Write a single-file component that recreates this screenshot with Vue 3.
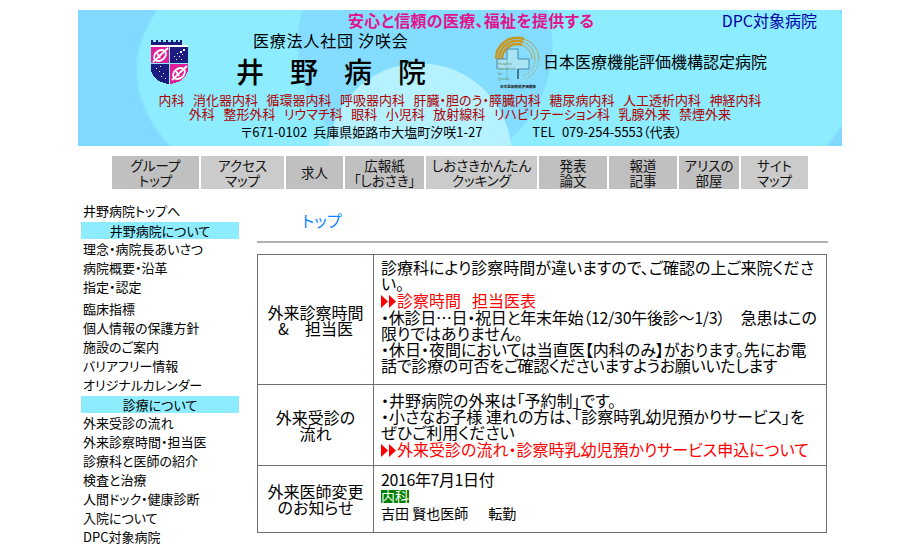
<template>
  <div class="page">
    <header class="head">
      <div class="head-top">
        <span class="tagline">安心と信頼の医療、福祉を提供する</span>
        <span class="dpc">DPC対象病院</span>
      </div>
      <div class="head-main">
        <svg class="shield" viewBox="0 0 37 45" shape-rendering="crispEdges">
          <path d="M0 1h2v2h3V1h2v2h3V1h2v2h3V1h2v2h3V1h2v2h3V1h2v2h2V1h2v5H0z" fill="#1c1c80" />
          <rect y="6" width="37" height="2" fill="#fff" />
          <path d="M0 8h18v16H0z" fill="#e0209a" />
          <path d="M19 8h18v16H19z" fill="#1c1c80" />
          <path d="M0 25h18v20h-2l-8-3-5-4-3-6z" fill="#1c1c80" />
          <path d="M19 25h18v7l-3 6-5 4-8 3h-2z" fill="#e0209a" />
          <g fill="none" stroke="#fff" stroke-width="1.800" shape-rendering="auto">
            <ellipse cx="9" cy="16.500" rx="6.500" ry="4.800" transform="rotate(-38 9 16.500)" />
            <path d="M2 23L17 9M6 14l3 5" />
            <ellipse cx="28" cy="34.500" rx="6.500" ry="4.800" transform="rotate(-38 28 34.500)" />
            <path d="M21 41L36 27M25 32l3 5" />
          </g>
          <g fill="#fff">
            <rect x="32" y="10" width="2" height="2" /><rect x="29" y="12" width="2" height="2" />
            <rect x="26" y="14" width="1" height="1" /><rect x="23" y="17" width="1" height="1" />
            <rect x="28" y="17" width="1" height="1" /><rect x="31" y="15" width="1" height="1" />
            <rect x="25" y="20" width="1" height="1" /><rect x="30" y="20" width="1" height="1" />
            <rect x="5" y="29" width="1" height="1" /><rect x="9" y="27" width="1" height="1" />
            <rect x="8" y="32" width="1" height="1" /><rect x="12" y="34" width="1" height="1" />
            <rect x="10" y="37" width="1" height="1" /><rect x="14" y="39" width="1" height="1" />
          </g>
        </svg>
        <div class="name">
          <div class="corp">医療法人社団 汐咲会</div>
          <div class="title">井野病院</div>
        </div>
        <svg class="jc" viewBox="0 0 46 56">
          <g fill="none" stroke="#c8961e">
            <path d="M2 24A21 21 0 0 1 30 4" stroke-width="2.500" />
            <path d="M5 24A18 18 0 0 1 29 7" stroke-width="2.500" />
            <path d="M8 24A15 15 0 0 1 28 10" stroke-width="2.500" />
            <path d="M30 4A21 21 0 0 1 45 24" stroke-width="0.800" />
            <path d="M29 7A18 18 0 0 1 41 24" stroke-width="0.800" />
            <path d="M28 10A15 15 0 0 1 38 24" stroke-width="0.800" />
            <path d="M45 24A22 22 0 0 1 31 44" stroke-width="0.900" stroke-dasharray="1.500 1.500" />
            <path d="M41 24A18 18 0 0 1 29 41" stroke-width="0.900" stroke-dasharray="1.500 1.500" />
          </g>
          <path d="M3 34V24h10V14h11v10h11v10H24" fill="#a8e4f4" stroke="#4f86a6" stroke-width="1" />
          <path d="M13 34H3M13 24v21" fill="none" stroke="#7aa8b8" stroke-width="0.600" />
          <path d="M24 34v10" stroke="#111" stroke-width="1" />
          <text x="4" y="30" class="jc-small">Hospital</text>
          <text x="4" y="35" class="jc-small">Accredited</text>
          <text x="4" y="40" class="jc-small">for</text>
          <text x="4" y="45" class="jc-small">Quality</text>
          <text x="6" y="53" class="jc-foot">日本医療機能評価機構</text>
        </svg>
        <div class="cert">日本医療機能評価機構認定病院</div>
      </div>
      <div class="depts">
        <div v-for="(row, i) in depts" :key="i" class="dept-row">
          <span v-for="d in row" :key="d">{{ d }}</span>
        </div>
      </div>
      <div class="addr">
        <span>〒671-0102</span>
        <span class="addr-city">兵庫県姫路市大塩町汐咲1-27</span>
        <span class="addr-tel">TEL</span>
        <span class="addr-num">079-254-5553（代表）</span>
      </div>
    </header>

    <nav class="nav">
      <a
        v-for="n in navItems"
        :key="n.label"
        class="nav-item"
        :class="{ pale: n.pale }"
        :style="{ width: n.w + 'px' }"
        v-html="n.label"
      ></a>
    </nav>

    <div class="body">
      <aside class="side">
        <template v-for="s in sideItems" :key="s.t">
          <div v-if="s.head" class="side-head">{{ s.t }}</div>
          <a v-else class="side-link" :class="{ gap: s.gap }">{{ s.t }}</a>
        </template>
      </aside>

      <main class="main">
        <h2 class="crumb">トップ</h2>
        <hr class="rule" />
        <table class="info">
          <tbody>
            <tr class="r1">
              <th>外来診察時間<br />&amp;　担当医</th>
              <td>
                診療科により診察時間が違いますので、ご確認の上ご来院くださ<br />い。<br />
                <a class="red"><svg class="arrows" viewBox="0 0 15 13"><path d="M0 0l7 6.500-7 6.500zM8 0l7 6.500-7 6.500z" /></svg>診察時間<span class="red-gap">担当医表</span></a><br />
                <span class="tight">・休診日…日・祝日と年末年始（12/30午後診～1/3）　急患はこの</span><br />限りではありません。<br />
                ・休日・夜間においては当直医【内科のみ】がおります。先にお電<br /><span class="tight">話で診療の可否をご確認くださいますようお願いいたします</span>
              </td>
            </tr>
            <tr class="r2">
              <th>外来受診の<br />流れ</th>
              <td>
                ・井野病院の外来は「予約制」です。<br />
                ・小さなお子様 連れの方は、「診察時乳幼児預かりサービス」を<br />ぜひご利用ください<br />
                <a class="red"><svg class="arrows" viewBox="0 0 15 13"><path d="M0 0l7 6.500-7 6.500zM8 0l7 6.500-7 6.500z" /></svg>外来受診の流れ・診察時乳幼児預かりサービス申込について</a>
              </td>
            </tr>
            <tr class="r3">
              <th>外来医師変更<br />のお知らせ</th>
              <td>
                <span class="date">2016年7月1日付</span><br />
                <span class="tag">内科</span><br />
                <span class="notice">吉田 賢也医師<span class="notice-gap">転勤</span></span>
              </td>
            </tr>
          </tbody>
        </table>
      </main>
    </div>
  </div>
</template>

<script setup>
const depts = [
  ['内科', '消化器内科', '循環器内科', '呼吸器内科', '肝臓・胆のう・膵臓内科', '糖尿病内科', '人工透析内科', '神経内科'],
  ['外科', '整形外科', 'リウマチ科', '眼科', '小児科', '放射線科', 'リハビリテーション科', '乳腺外来', '禁煙外来'],
]

const navItems = [
  { label: 'グループ<br>トップ', w: 87 },
  { label: 'アクセス<br>マップ', w: 83, pale: true },
  { label: '求人', w: 57 },
  { label: '広報紙<br>「しおさき」', w: 79 },
  { label: 'しおさきかんたん<br>クッキング', w: 111, pale: true },
  { label: '発表<br>論文', w: 68 },
  { label: '報道<br>記事', w: 68 },
  { label: 'アリスの<br>部屋', w: 60 },
  { label: 'サイト<br>マップ', w: 67, pale: true },
]

const sideItems = [
  { t: '井野病院トップへ' },
  { t: '井野病院について', head: true },
  { t: '理念・病院長あいさつ' },
  { t: '病院概要・沿革' },
  { t: '指定・認定' },
  { t: '臨床指標', gap: true },
  { t: '個人情報の保護方針' },
  { t: '施設のご案内' },
  { t: 'バリアフリー情報' },
  { t: 'オリジナルカレンダー' },
  { t: '診療について', head: true },
  { t: '外来受診の流れ' },
  { t: '外来診察時間・担当医' },
  { t: '診療科と医師の紹介' },
  { t: '検査と治療' },
  { t: '人間ドック・健康診断' },
  { t: '入院について' },
  { t: 'DPC対象病院' },
]
</script>

<style>
html,
body {
  margin: 0;
  background: #fff;
  overflow: hidden;
}
</style>

<style scoped>
.page {
  width: 764px;
  height: 544px;
  margin-left: 78px;
  padding-top: 10px;
  box-sizing: border-box;
  overflow: hidden;
  font-family: "Noto Sans CJK JP", "Liberation Sans", sans-serif;
  font-feature-settings: "palt";
  color: #000;
}

.head {
  height: 136px;
  box-sizing: border-box;
  background:
    radial-gradient(circle 92px at 342px 145px, #b6f1ff 99%, transparent 100%),
    radial-gradient(circle 128px at 347px 35px, #84dcff 99%, transparent 100%),
    radial-gradient(ellipse 363px 182px at 420px 60px, #8eecff 99%, transparent 100%),
    #82d9ff;
}

.head-top {
  display: flex;
  align-items: center;
  height: 20px;
  padding: 0 25px 0 270px;
  justify-content: space-between;
}

.tagline {
  font-size: 16px;
  font-weight: 700;
  line-height: 20px;
  letter-spacing: 0.3px;
  color: #e0148c;
}

.dpc {
  font-size: 16px;
  color: #0000a8;
}

.head-main {
  display: flex;
  height: 64px;
  box-sizing: border-box;
  padding: 1px 0 0 73px;
}

.shield {
  width: 37px;
  height: 45px;
  margin-top: 8px;
}

.name {
  width: 306px;
  padding-left: 27px;
  box-sizing: border-box;
}

.corp {
  margin-left: 38px;
  font-size: 16px;
  line-height: 18px;
  letter-spacing: 0.8px;
}

.title {
  margin-top: 4px;
  margin-left: 21px;
  font-size: 28px;
  line-height: 36px;
  font-weight: 500;
  letter-spacing: 26px;
  white-space: nowrap;
}

.jc {
  width: 46px;
  height: 56px;
  margin-top: 4px;
}

.jc-small {
  font-size: 3.500px;
  fill: #6a8a60;
}

.jc-foot {
  font-size: 3.600px;
  fill: #222;
  font-weight: 700;
}

.cert {
  margin-left: 3px;
  margin-top: 20px;
  font-size: 16px;
  line-height: 20px;
  white-space: nowrap;
}

.depts {
  margin-top: -1px;
}

.dept-row {
  display: flex;
  justify-content: center;
  gap: 8.500px;
  font-size: 13px;
  line-height: 14px;
  color: #b00000;
  white-space: nowrap;
}

.addr {
  display: flex;
  margin-top: 3px;
  padding-left: 163px;
  font-size: 13px;
  line-height: 16px;
  white-space: nowrap;
}

.addr-city {
  margin-left: 6px;
}

.addr-tel {
  margin-left: 50px;
}

.addr-num {
  margin-left: 7px;
}

.nav {
  display: flex;
  gap: 2px;
  margin-top: 10px;
  padding-left: 34px;
}

.nav-item {
  display: flex;
  align-items: center;
  justify-content: center;
  flex: none;
  height: 33px;
  background: #c0c0c0;
  font-size: 13.500px;
  line-height: 15px;
  text-align: center;
  color: #111;
  white-space: nowrap;
}

.nav-item.pale {
  background: #cbcbcb;
}

.body {
  display: flex;
  margin-top: 13px;
}

.side {
  width: 161px;
  padding-left: 3px;
  flex: none;
  box-sizing: border-box;
}

.side-link,
.side-head {
  display: block;
  height: 19px;
  font-size: 13px;
  line-height: 17px;
  white-space: nowrap;
}

.side-link {
  padding-left: 2px;
}

.side-link.gap {
  margin-top: 3px;
}

.side-head {
  height: 17px;
  margin: 1px 0;
  line-height: 17px;
  text-align: center;
  background: #8eecff;
}

.main {
  flex: none;
  width: 571px;
  margin-left: 18px;
}

.crumb {
  margin: 7px 0 0 45px;
  font-size: 16px;
  line-height: 22px;
  font-weight: 400;
  color: #0a84ff;
}

.rule {
  margin: 10px 0 0;
  height: 0;
  border: 0;
  border-top: 2px solid #b0b0b0;
}

.info {
  width: 570px;
  margin-top: 11px;
  border-collapse: collapse;
  font-size: 16px;
  line-height: 16px;
}

.info th,
.info td {
  border: 1px solid #707070;
  padding: 0;
}

.info th {
  width: 115px;
  font-weight: 400;
  text-align: center;
}

.info td {
  padding: 7px 0 0 7px;
  vertical-align: top;
  white-space: nowrap;
}

.info .r1 td {
  padding-top: 4px;
}

.info .r3 td {
  padding-top: 5px;
}

.r1 {
  height: 130px;
}

.r2 {
  height: 81px;
}

.r3 {
  height: 67px;
}

.tight {
  letter-spacing: -0.28px;
}

.red {
  display: inline-block;
  line-height: 18px;
  color: #f00;
}

.red-gap {
  margin-left: 11px;
}

.arrows {
  width: 15px;
  height: 13px;
  margin-right: 1px;
  vertical-align: -1px;
  fill: #f00;
}

.date {
  letter-spacing: -0.4px;
}

.tag {
  display: inline-block;
  margin-top: 3px;
  background: #008000;
  color: #fff;
  font-size: 14px;
  line-height: 13px;
}

.notice {
  display: inline-block;
  margin-top: 2px;
  font-size: 14px;
  line-height: 16px;
}

.notice-gap {
  margin-left: 20px;
}
</style>
